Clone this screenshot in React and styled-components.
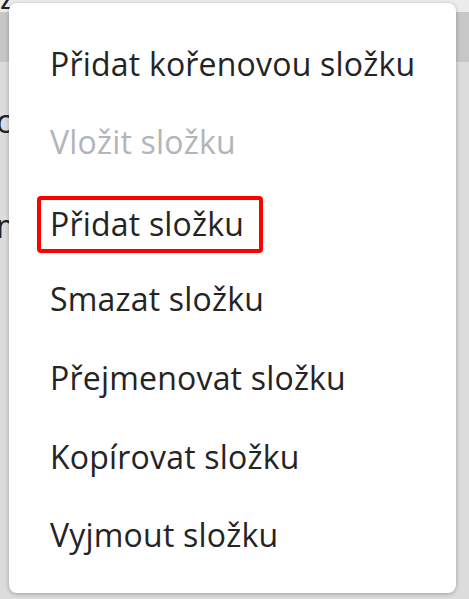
import React from "react";
import styled, { createGlobalStyle } from "styled-components";

const GlobalStyle = createGlobalStyle`
  html, body {
    margin: 0;
    padding: 0;
    background: #dcdcdc;
    font-family: 'Open Sans', 'Noto Sans', sans-serif;
  }
`;

const Page = styled.div`
  position: relative;
  width: 469px;
  height: 599px;
  overflow: hidden;
  background: #dcdcdc;
`;

const TopStrip = styled.div`
  height: 12px;
  background: #ececec;
  overflow: hidden;
  font-size: 32px;
  line-height: 12px;
  color: #222;
  display: flex;
  align-items: flex-end;
`;

const TopGlyph = styled.span`
  display: block;
  transform: translateY(-9px);
`;

const HeaderBand = styled.div`
  height: 50px;
  background: #c7c7c7;
`;

const Backdrop = styled.div`
  display: flex;
  flex-direction: column;
`;

const BackdropRow = styled.div`
  height: ${(p) => p.h}px;
  margin-left: -4px;
  font-size: 32px;
  line-height: ${(p) => p.h}px;
  color: #222;
  white-space: nowrap;
`;

const Menu = styled.ul`
  position: absolute;
  left: 9px;
  top: 3px;
  width: 447px;
  height: 590px;
  box-sizing: border-box;
  margin: 0;
  padding: 21px 0 0 41px;
  list-style: none;
  background: #fff;
  border-radius: 8px;
  box-shadow: 0 1px 4px rgba(0, 0, 0, 0.28);
  display: flex;
  flex-direction: column;
`;

const Item = styled.li`
  height: 78.6px;
  display: flex;
  align-items: center;
  font-size: 32px;
  letter-spacing: 0.2px;
  color: ${(p) => (p.disabled ? "#b2b5b9" : "#242424")};
  white-space: nowrap;
`;

const Label = styled.span`
  display: inline-block;
  line-height: 1.36;
  ${(p) =>
    p.highlight &&
    `
    margin-left: -13px;
    margin-top: 8px;
    padding: 2px 15px 3px 9px;
    border: 4px solid #ff0000;
    border-radius: 4px;
  `}
`;

const items = [
  { label: "Přidat kořenovou složku" },
  { label: "Vložit složku", disabled: true },
  { label: "Přidat složku", highlight: true },
  { label: "Smazat složku" },
  { label: "Přejmenovat složku" },
  { label: "Kopírovat složku" },
  { label: "Vyjmout složku" },
];

export default function App() {
  return (
    <Page>
      <GlobalStyle />
      <Backdrop>
        <TopStrip>
          <TopGlyph>z</TopGlyph>
        </TopStrip>
        <HeaderBand />
        <BackdropRow h={118}>c</BackdropRow>
        <BackdropRow h={92}>m</BackdropRow>
      </Backdrop>
      <Menu>
        {items.map((it) => (
          <Item key={it.label} disabled={it.disabled}>
            <Label highlight={it.highlight}>{it.label}</Label>
          </Item>
        ))}
      </Menu>
    </Page>
  );
}
